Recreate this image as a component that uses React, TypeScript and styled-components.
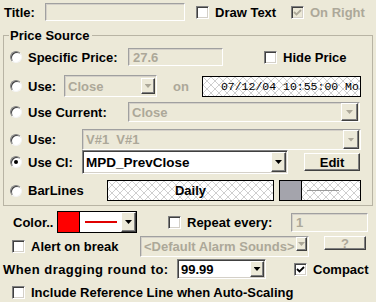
import React from "react";
import styled, { createGlobalStyle, css } from "styled-components";

const BG = "#ECE9D8";
const DIS = "#ACA899";

const Global = createGlobalStyle`
  html, body { margin: 0; padding: 0; background: ${BG}; }
  * { box-sizing: border-box; }
`;

const Dialog = styled.div`
  width: 376px;
  height: 302px;
  overflow: hidden;
  background: ${BG};
  font-family: "Liberation Sans", Arial, sans-serif;
  font-size: 13px;
  font-weight: bold;
  color: #000;
  display: flex;
  flex-direction: column;
`;

const Row = styled.div<{ $h: number; $mt?: number; $pl?: number }>`
  display: flex;
  align-items: center;
  flex-shrink: 0;
  height: ${(p) => p.$h}px;
  margin-top: ${(p) => p.$mt ?? 0}px;
  padding-left: ${(p) => p.$pl ?? 0}px;
  white-space: nowrap;
`;

const Label = styled.span<{ $w?: number; $muted?: boolean; $spacing?: number; $ml?: number }>`
  ${(p) => (p.$w ? `width:${p.$w}px; flex-shrink:0;` : "")}
  margin-left: ${(p) => p.$ml ?? 0}px;
  color: ${(p) => (p.$muted ? DIS : "#000")};
  letter-spacing: ${(p) => p.$spacing ?? 0}px;
  line-height: 15px;
`;

const sunken = css`
  border: 1px solid;
  border-color: #808080 #fff #fff #808080;
  box-shadow: inset 1px 1px 0 #404040, inset -1px -1px 0 #d4d0c8;
`;

const sunkenSoft = css`
  border: 1px solid;
  border-color: #a0a0a0 #fff #fff #a0a0a0;
  box-shadow: inset 1px 1px 0 #d4d0c8;
`;

const raised = css`
  border: 1px solid;
  border-color: #fff #404040 #404040 #fff;
  box-shadow: inset -1px -1px 0 #808080;
`;

const hatch = css`
  background-color: #fff;
  background-image: linear-gradient(
      45deg,
      transparent calc(50% - 0.5px),
      #cfcfcf calc(50% - 0.5px),
      #cfcfcf calc(50% + 0.5px),
      transparent calc(50% + 0.5px)
    ),
    linear-gradient(
      -45deg,
      transparent calc(50% - 0.5px),
      #cfcfcf calc(50% - 0.5px),
      #cfcfcf calc(50% + 0.5px),
      transparent calc(50% + 0.5px)
    );
  background-size: 8px 8px;
`;

const Field = styled.div<{ $w: number; $h: number; $white?: boolean }>`
  ${sunkenSoft};
  width: ${(p) => p.$w}px;
  height: ${(p) => p.$h}px;
  flex-shrink: 0;
  background: ${(p) => (p.$white ? "#fff" : BG)};
  color: ${DIS};
  display: flex;
  align-items: center;
  padding-left: 4px;
  line-height: 15px;
`;

const Combo = styled.div<{ $w: number; $h: number; $white?: boolean }>`
  ${(p) => (p.$white ? sunken : sunkenSoft)};
  width: ${(p) => p.$w}px;
  height: ${(p) => p.$h}px;
  flex-shrink: 0;
  background: ${(p) => (p.$white ? "#fff" : BG)};
  display: flex;
  align-items: center;
  padding-left: 3px;
  padding-right: 1px;
`;

const ComboText = styled.span<{ $muted?: boolean; $size?: number }>`
  flex: 1;
  overflow: hidden;
  color: ${(p) => (p.$muted ? DIS : "#000")};
  font-size: ${(p) => p.$size ?? 13}px;
  line-height: 15px;
`;

const DropBtn = styled.span<{ $w: number; $h: number; $muted?: boolean; $top?: boolean }>`
  ${raised};
  width: ${(p) => p.$w}px;
  height: ${(p) => p.$h}px;
  flex-shrink: 0;
  align-self: ${(p) => (p.$top ? "flex-start" : "center")};
  background: ${BG};
  display: flex;
  align-items: center;
  justify-content: center;
  &::after {
    content: "";
    width: 7px;
    height: 4px;
    background: ${(p) => (p.$muted ? DIS : "#000")};
    clip-path: polygon(0 0, 100% 0, 50% 100%);
  }
`;

const PushButton = styled.span<{ $w: number; $h: number; $ml?: number; $muted?: boolean; $top?: boolean }>`
  ${raised};
  width: ${(p) => p.$w}px;
  height: ${(p) => p.$h}px;
  margin-left: ${(p) => p.$ml ?? 0}px;
  flex-shrink: 0;
  align-self: ${(p) => (p.$top ? "flex-start" : "center")};
  background: ${BG};
  color: ${(p) => (p.$muted ? DIS : "#000")};
  display: flex;
  align-items: center;
  justify-content: center;
  line-height: 15px;
`;

const Option = styled.span<{ $w: number }>`
  width: ${(p) => p.$w}px;
  flex-shrink: 0;
  display: flex;
  align-items: center;
  gap: 6px;
  line-height: 15px;
`;

const RadioDot = styled.span<{ $on?: boolean }>`
  width: 12px;
  height: 12px;
  border-radius: 50%;
  flex-shrink: 0;
  background: #fff;
  border: 1px solid;
  border-color: #808080 #f4f4f4 #f4f4f4 #808080;
  box-shadow: inset 1px 1px 0 #404040;
  display: flex;
  align-items: center;
  justify-content: center;
  &::after {
    content: "";
    width: 4px;
    height: 4px;
    border-radius: 50%;
    background: ${(p) => (p.$on ? "#000" : "transparent")};
  }
`;

const CheckItem = styled.span<{ $w?: number; $ml?: number }>`
  ${(p) => (p.$w ? `width:${p.$w}px; flex-shrink:0;` : "")}
  margin-left: ${(p) => p.$ml ?? 0}px;
  display: flex;
  align-items: center;
  gap: 6px;
  line-height: 15px;
`;

const CheckBox = styled.span<{ $disabled?: boolean }>`
  ${sunken};
  width: 13px;
  height: 13px;
  flex-shrink: 0;
  background: ${(p) => (p.$disabled ? BG : "#fff")};
  display: flex;
  align-items: center;
  justify-content: center;
`;

const Group = styled.fieldset`
  margin: 7px 3px 0;
  padding: 0 0 4px 6px;
  border: 1px solid #b8b4a4;
  min-width: 0;
  display: flex;
  flex-direction: column;
  flex-shrink: 0;
`;

const Legend = styled.legend`
  padding: 0 2px 0 1px;
  margin-left: -1px;
  line-height: 15px;
`;

const DateBox = styled.div<{ $ml: number }>`
  ${hatch};
  margin-left: ${(p) => p.$ml}px;
  width: 159px;
  height: 21px;
  flex-shrink: 0;
  border: 1px solid #000;
  overflow: hidden;
  white-space: nowrap;
  padding-left: 18px;
  font-family: "Liberation Mono", "Courier New", monospace;
  font-weight: normal;
  font-size: 11.5px;
  line-height: 19px;
`;

const HatchBox = styled.div<{ $w: number }>`
  ${hatch};
  width: ${(p) => p.$w}px;
  height: 21px;
  flex-shrink: 0;
  border: 1px solid #000;
  display: flex;
  align-items: center;
  justify-content: center;
  line-height: 15px;
`;

const StyleGroup = styled.div`
  display: flex;
  margin-left: 5px;
  height: 21px;
  flex-shrink: 0;
`;

const GraySwatch = styled.div`
  width: 23px;
  height: 21px;
  background: #a4a4ac;
  border: 1px solid #000;
`;

const LineBox = styled.div`
  ${hatch};
  width: 59px;
  height: 21px;
  border: 1px solid #000;
  border-left: none;
  display: flex;
  align-items: center;
  padding-left: 5px;
  &::after {
    content: "";
    width: 32px;
    height: 1px;
    background: #9a9a9a;
  }
`;

const ColorPicker = styled.div`
  display: flex;
  width: 80px;
  height: 22px;
  flex-shrink: 0;
  border: 1px solid #000;
  background: #fff;
`;

const RedSwatch = styled.div`
  width: 22px;
  background: #ff0000;
  border-right: 1px solid #000;
`;

const LinePreview = styled.div`
  flex: 1;
  display: flex;
  align-items: center;
  justify-content: center;
  &::after {
    content: "";
    width: 32px;
    height: 2px;
    background: #e00000;
  }
`;

const Tick = ({ muted }: { muted?: boolean }) => (
  <svg width="9" height="9" viewBox="0 0 9 9">
    <path d="M1 4 L3.5 6.5 L8 2" fill="none" stroke={muted ? DIS : "#000"} strokeWidth="1.8" />
  </svg>
);

const Radio = ({ w, on, children }: { w: number; on?: boolean; children: React.ReactNode }) => (
  <Option $w={w}>
    <RadioDot $on={on} />
    <span>{children}</span>
  </Option>
);

export default function App() {
  return (
    <>
      <Global />
      <Dialog>
        <Row $h={18} $mt={3} $pl={4}>
          <Label $w={41}>Title:</Label>
          <Field $w={140} $h={18} />
          <CheckItem $w={95} $ml={11}>
            <CheckBox />
            <span>Draw Text</span>
          </CheckItem>
          <CheckItem>
            <CheckBox $disabled>
              <Tick muted />
            </CheckBox>
            <Label $muted>On Right</Label>
          </CheckItem>
        </Row>

        <Group>
          <Legend>Price Source</Legend>
          <Row $h={18} $mt={5}>
            <Radio w={118}>Specific Price:</Radio>
            <Field $w={95} $h={18}>27.6</Field>
            <CheckItem $ml={41}>
              <CheckBox />
              <span>Hide Price</span>
            </CheckItem>
          </Row>
          <Row $h={22} $mt={9}>
            <Radio w={54}>Use:</Radio>
            <Combo $w={93} $h={22}>
              <ComboText $muted>Close</ComboText>
              <DropBtn $w={14} $h={16} $muted />
            </Combo>
            <Label $muted $ml={16}>on</Label>
            <DateBox $ml={13}>07/12/04 10:55:00 Mo</DateBox>
          </Row>
          <Row $h={20} $mt={5}>
            <Radio w={118}>Use Current:</Radio>
            <Combo $w={232} $h={20}>
              <ComboText $muted>Close</ComboText>
              <DropBtn $w={17} $h={18} $muted />
            </Combo>
          </Row>
          <Row $h={21} $mt={7}>
            <Radio w={72}>Use:</Radio>
            <Combo $w={279} $h={21}>
              <ComboText $muted>V#1&nbsp;&nbsp;V#1</ComboText>
              <DropBtn $w={16} $h={19} $muted />
            </Combo>
          </Row>
          <Row $h={24}>
            <Radio w={72} on>
              Use CI:
            </Radio>
            <Combo $w={206} $h={24} $white>
              <ComboText $size={13.5}>MPD_PrevClose</ComboText>
              <DropBtn $w={15} $h={20} />
            </Combo>
            <PushButton $w={56} $h={18} $ml={16}>
              Edit
            </PushButton>
          </Row>
          <Row $h={21} $mt={6}>
            <Radio w={97}>BarLines</Radio>
            <HatchBox $w={167}>Daily</HatchBox>
            <StyleGroup>
              <GraySwatch />
              <LineBox />
            </StyleGroup>
          </Row>
        </Group>

        <Row $h={22} $mt={5} $pl={13}>
          <Label $w={44}>Color..</Label>
          <ColorPicker>
            <RedSwatch />
            <LinePreview />
            <DropBtn $w={15} $h={20} />
          </ColorPicker>
          <CheckItem $w={123} $ml={31}>
            <CheckBox />
            <span>Repeat every:</span>
          </CheckItem>
          <Field $w={77} $h={19}>1</Field>
        </Row>

        <Row $h={21} $mt={3} $pl={12}>
          <CheckItem $w={128}>
            <CheckBox />
            <span>Alert on break</span>
          </CheckItem>
          <Combo $w={169} $h={21}>
            <ComboText $muted>&lt;Default Alarm Sounds&gt;</ComboText>
            <DropBtn $w={11} $h={14} $muted $top />
          </Combo>
          <PushButton $w={42} $h={14} $ml={15} $muted $top>
            ?
          </PushButton>
        </Row>

        <Row $h={20} $mt={2} $pl={3}>
          <Label $w={174} $spacing={0.45}>
            When dragging round to:
          </Label>
          <Combo $w={89} $h={20} $white>
            <ComboText>99.99</ComboText>
            <DropBtn $w={14} $h={16} />
          </Combo>
          <CheckItem $ml={28}>
            <CheckBox>
              <Tick />
            </CheckBox>
            <span>Compact</span>
          </CheckItem>
        </Row>

        <Row $h={15} $mt={6} $pl={12}>
          <CheckItem>
            <CheckBox />
            <span>Include Reference Line when Auto-Scaling</span>
          </CheckItem>
        </Row>
      </Dialog>
    </>
  );
}
